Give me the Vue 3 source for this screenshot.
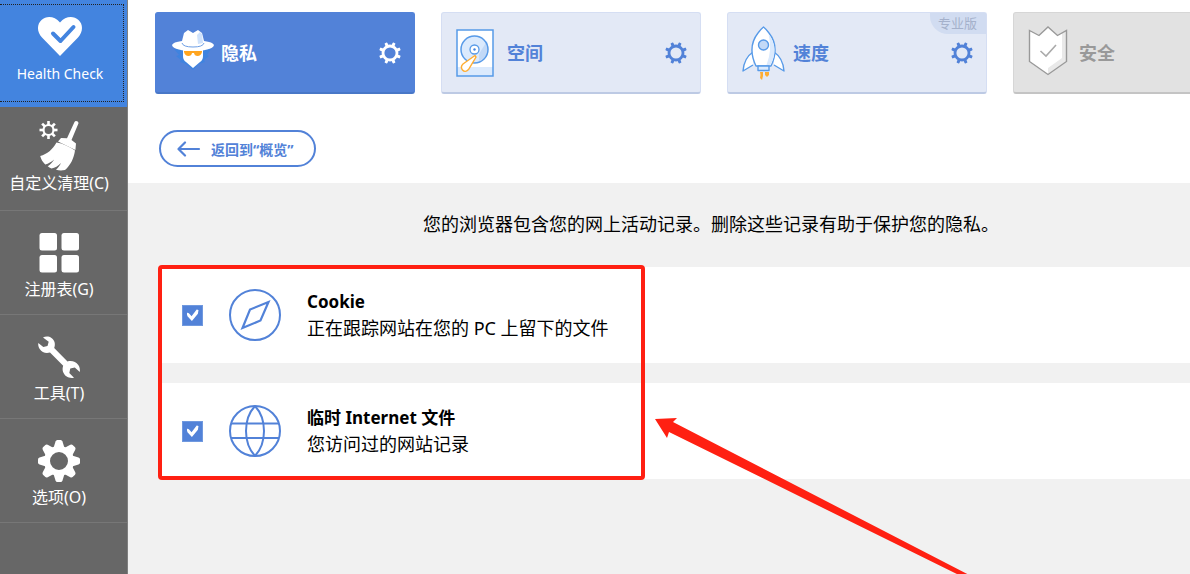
<script setup>
import { ref } from 'vue'

const nav = [
  { id: 'health', label: 'Health Check' },
  { id: 'clean', label: '自定义清理(C)' },
  { id: 'registry', label: '注册表(G)' },
  { id: 'tools', label: '工具(T)' },
  { id: 'options', label: '选项(O)' },
]
const cards = [
  { id: 'privacy', label: '隐私', tone: 'active', gear: true },
  { id: 'space', label: '空间', tone: 'normal', gear: true },
  { id: 'speed', label: '速度', tone: 'normal', gear: true, badge: '专业版' },
  { id: 'security', label: '安全', tone: 'disabled', gear: false },
]
const rows = ref([
  { id: 'cookie', title: 'Cookie', text: '正在跟踪网站在您的 PC 上留下的文件', checked: true },
  { id: 'temp', title: '临时 Internet 文件', text: '您访问过的网站记录', checked: true },
])
const teeth = [0, 45, 90, 135, 180, 225, 270, 315]
</script>

<template>
  <div class="app">
    <nav class="sidebar">
      <button v-for="n in nav" :key="n.id" type="button" class="nav-item" :class="{ current: n.id === 'health' }">
        <svg class="nav-icon" viewBox="0 0 52 52" aria-hidden="true">
          <g v-if="n.id === 'health'">
            <path fill="#fff" d="M26 46 8 27.500C2.500 21.500 3 14 7.500 10c5-4.500 13-4 18.500 2.500C31.500 6 39.500 5.500 44.500 10c4.500 4 5 11.500-.5 17.500Z" />
            <path fill="none" stroke="#4384df" stroke-width="4" stroke-linecap="round" stroke-linejoin="round" d="m19 23.500 7.500 7.500L39.500 17" />
          </g>
          <g v-else-if="n.id === 'clean'" fill="#fff">
            <g transform="translate(15.500 9)">
              <rect v-for="t in teeth" :key="t" x="-1.300" y="-9" width="2.600" height="4" :transform="`rotate(${t})`" />
              <circle r="5" fill="none" stroke="#fff" stroke-width="2.200" />
            </g>
            <path d="M41.500 1c.8-1.800 3.900-1 4 1.200L38.500 19l4.500 3.500-.6 6.500L25 20.500l3-3.500 6 .300Z" />
            <path d="M23.500 21.500c6.500 1 13 4 18.500 8-1 7.500-4.500 15-10 19.500-3 .7-6 .7-9-.3 2-2 4-4.200 5-6.700-3 3-6 5-9.500 5.400-1.500-.5-2.700-1.200-3.800-2.200 3-2 5-4.200 6.500-6.700-3 2.500-5.500 4-9 5-2.500-2.500-4-5-5-8.500 7-2 12.500-6.500 16.300-13.500Z" />
          </g>
          <g v-else-if="n.id === 'registry'" fill="#fff">
            <rect x="6.500" y="6" width="17.500" height="17.500" rx="2.500" />
            <rect x="28.500" y="6" width="17.500" height="17.500" rx="2.500" />
            <rect x="6.500" y="28" width="17.500" height="17.500" rx="2.500" />
            <rect x="28.500" y="28" width="17.500" height="17.500" rx="2.500" />
          </g>
          <path v-else-if="n.id === 'tools'" fill="#fff" d="M10 6.500c4-2.500 10-.5 11.500 4.500.6 2 .4 4-.3 6L34.500 30.500c4-1.300 8.500.2 10.800 3.500 1.400 2 1.900 4.500 1.500 7l-5-4.500-4.500 1-1 4.500 4.700 4.800c-5 1-9.500-1.500-11-6-.6-2-.5-4 .2-6L17 21.500c-4 1.300-8 0-10.300-3.500-1.300-2-1.700-4-1.400-6l5 4 4.200-1 1.200-4.200Z" />
          <g v-else transform="translate(26 26)" fill="#fff">
            <path v-for="t in teeth" :key="t" d="M-5.500-13-3.500-19.500q.6-1.500 1.800-1.500h3.400q1.200 0 1.800 1.500L5.500-13Z" :transform="`rotate(${t})`" />
            <circle r="12" fill="none" stroke="#fff" stroke-width="6" />
          </g>
        </svg>
        <span>{{ n.label }}</span>
      </button>
    </nav>

    <main class="main">
      <header class="header">
        <div class="cards">
          <section v-for="c in cards" :key="c.id" class="card" :class="c.tone">
            <svg class="card-icon" viewBox="1 4 44 56" aria-hidden="true">
              <g v-if="c.id === 'privacy'">
                <path fill="#3f83df" d="M4 28h37l-4 6 2 1-5 4 1 2-6 2-6 6-7-6-6-2 1-2-5-4 3-1Z" />
                <path fill="#fff" d="M13 28h20v7q0 4-3 6l-7 6-7-6q-3-2-3-6Z" />
                <path fill="#ffa51f" d="M14 30h18v1q-1 4-4.500 4-3 0-3.500-3h-2q-.5 3-3.500 3-3.500 0-4.500-4Z" />
                <path fill="#fff" d="M2 24q1-3 10-4l2-8 4-3 5 3 5-3 4 3 2 8q9 1 10 4c-1 8-41 8-42 0Z" />
                <path fill="#cfe2fb" d="m27 14 3-3 2 2 1 9-5 1Z" />
                <path fill="none" stroke="#6e9fe5" d="M12 22q1 4 11 4t11-4" />
              </g>
              <g v-else-if="c.id === 'space'">
                <path fill="#fff" d="M1 9h36v46H1z" />
                <path fill="#dbeafd" d="M1 46h36v9H1z" />
                <circle cx="18.500" cy="28.500" r="13.500" fill="#dbeafd" />
                <path fill="#c2d9f7" d="M23 33 31 20q4 15-8 20Z" />
                <circle cx="18.500" cy="28.500" r="13.500" fill="none" stroke="#579ae8" stroke-width="1.500" />
                <circle cx="18.500" cy="28.500" r="4.500" fill="#fff" stroke="#579ae8" stroke-width="1.300" />
                <circle cx="18.500" cy="28.500" r="1.200" fill="#4384df" />
                <path fill="#fff" stroke="#ffad32" stroke-width="1.400" d="M19 34.500 7 43q-3 3-.5 6t6-.5L20 36Z" />
                <path fill="none" stroke="#579ae8" stroke-width="1.500" d="M1 9h36v46H1z" />
              </g>
              <g v-else-if="c.id === 'speed'" stroke="#579ae8" stroke-width="1.400" stroke-linejoin="round">
                <path fill="#fff" d="M11 31Q2 37 1 50l10-6M32 31q9 6 10 19l-10-6" />
                <path fill="#fff" d="M14 45Q5 26 16 12q3-4 5.500-6 2.500 2 5.500 6 11 14 2 33Z" />
                <path fill="#dbeafd" stroke="none" d="M26.500 13q11 14 2 31h-4q6-15 2-31Z" />
                <circle cx="21.500" cy="24" r="5" fill="#c2d9f7" />
                <path fill="#dbeafd" d="M16 45h11v4.500H16z" />
                <path fill="#ffad32" stroke="none" d="M18 51h3v4l-1 4-2-2 .5-3Zm5 0h4v3l-2 2-2-2Z" />
              </g>
              <g v-else stroke-linejoin="miter">
                <path fill="#fff" d="m1.500 9.500 9.500 5L20 6l9.500 8.500 9-5v31L20 53.500l-18.500-13Z" />
                <path fill="#e9e9e9" d="m34 12 4.500-2v30L20 53v-6l14-10Z" />
                <path fill="none" stroke="#999" stroke-width="1.400" d="m1.500 9.500 9.500 5L20 6l9.500 8.500 9-5v31L20 53.500l-18.500-13Z" />
                <path fill="none" stroke="#aaa" stroke-width="1.600" d="m12.500 30 5.500 5 10-11" />
              </g>
            </svg>
            <h2>{{ c.label }}</h2>
            <span v-if="c.badge" class="badge">{{ c.badge }}</span>
            <button v-if="c.gear" type="button" class="gear" :aria-label="`${c.label}设置`">
              <svg viewBox="-11 -11 22 22" aria-hidden="true">
                <rect v-for="t in teeth" :key="t" x="-1.500" y="-11" width="3" height="4.500" rx=".7" fill="currentColor" :transform="`rotate(${t + 22.5})`" />
                <circle r="7" fill="none" stroke="currentColor" stroke-width="2.800" />
              </svg>
            </button>
          </section>
        </div>
        <button type="button" class="back">
          <svg viewBox="0 0 24 18" aria-hidden="true">
            <path fill="none" stroke="currentColor" stroke-width="2.200" stroke-linecap="round" stroke-linejoin="round" d="M22 9H2M8 2.500 1.500 9 8 15.500" />
          </svg>
          <span>返回到“概览”</span>
        </button>
      </header>

      <p class="summary">您的浏览器包含您的网上活动记录。删除这些记录有助于保护您的隐私。</p>

      <div class="list">
        <label v-for="r in rows" :key="r.id" class="row">
          <input v-model="r.checked" type="checkbox" />
          <svg class="row-icon" viewBox="-27 -27 54 54" fill="none" stroke="#5282d8" stroke-width="2" aria-hidden="true">
            <circle r="25" />
            <path v-if="r.id === 'cookie'" stroke-width="2.200" d="M13.500-13-5-5.500-12.500 13 5.500 5.500Z" />
            <path v-else d="M0-25C-12-12-12 12 0 25M0-25C12-12 12 12 0 25M-24-7.500h48M-24 7h48" />
          </svg>
          <span class="copy">
            <strong>{{ r.title }}</strong>
            <span>{{ r.text }}</span>
          </span>
        </label>
        <div class="frame"></div>
        <svg class="arrow" viewBox="0 0 320 160" aria-hidden="true">
          <path fill="#ff2012" d="M0 1 22 0 18 4 320 160H310L14 14 12 20Z" />
        </svg>
      </div>
    </main>
  </div>
</template>

<style>
body {
  background: #f1f1f1;
  overflow: hidden;
}
</style>

<style scoped>
.app {
  display: flex;
  min-height: 100vh;
  font-family: "Noto Sans", "Noto Sans CJK SC", sans-serif;
  color: #000;
}
button {
  font-family: inherit;
  border: 0;
  margin: 0;
  padding: 0;
  background: none;
}
.sidebar {
  flex: none;
  width: 128px;
  box-sizing: border-box;
  background: #676767;
  border-right: 1px solid #808080;
}
.nav-item {
  display: flex;
  flex-direction: column;
  align-items: center;
  width: 100%;
  height: 104px;
  padding: 16px 9px 0 0;
  color: #fff;
  font-size: 16px;
  line-height: 20px;
  white-space: nowrap;
  border-bottom: 1px solid #777;
}
.nav-item:nth-child(2) {
  padding-top: 14px;
}
.nav-item.current {
  height: 107px;
  padding: 10px 7px 0 0;
  gap: 2px;
  background: #4384df;
  border-bottom: 0;
  font-size: 14px;
  position: relative;
}
.nav-item.current::after {
  content: "";
  position: absolute;
  inset: 4px 3px 5px 0;
  border: 1px dotted #222;
  border-left: 0;
}
.nav-icon {
  flex: none;
  width: 52px;
  height: 52px;
  overflow: visible;
}
.main {
  flex: 1;
  min-width: 0;
  background: #f1f1f1;
  overflow: hidden;
}
.header {
  background: #fff;
  padding: 12px 0 16px 27px;
}
.cards {
  display: flex;
  gap: 26px;
  overflow: hidden;
}
.card {
  position: relative;
  flex: 0 0 260px;
  height: 82px;
  box-sizing: border-box;
  display: flex;
  align-items: center;
  padding: 0 13px 0 15px;
  border: 1px solid #d5def3;
  border-bottom: 2px solid #bdcae4;
  border-radius: 3px;
  background: #e3e9f6;
  color: #5282d8;
}
.card.active {
  background: #5282d8;
  border-color: #5282d8;
  border-bottom-color: #4877c7;
  color: #fff;
}
.card.disabled {
  background: #e2e2e2;
  border-color: #d6d6d6;
  border-bottom-color: #c4c4c4;
  color: #999;
}
.card-icon {
  width: 44px;
  height: 56px;
  overflow: visible;
}
.card h2 {
  margin: 0 auto 0 6px;
  font-size: 18px;
  line-height: 24px;
}
.gear {
  width: 22px;
  height: 22px;
  color: inherit;
}
.gear svg {
  display: block;
}
.badge {
  position: absolute;
  top: 0;
  right: 0;
  padding: 0 9px 0 8px;
  border-bottom-left-radius: 18px;
  background: #d1dcf1;
  color: #a5b1cb;
  font-size: 13px;
  line-height: 21px;
}
.back {
  display: flex;
  align-items: center;
  gap: 10px;
  margin: 36px 0 0 4px;
  height: 37px;
  padding: 0 21px 0 16px;
  border: 2px solid #5282d8;
  border-radius: 19px;
  background: #fff;
  color: #5282d8;
  font-size: 14px;
  font-weight: 700;
}
.back svg {
  width: 24px;
  height: 18px;
}
.summary {
  margin: 27px 0 29px 295px;
  font-size: 18px;
  line-height: 28px;
  white-space: nowrap;
}
.list {
  position: relative;
  display: grid;
  gap: 20px;
  margin-left: 32px;
}
.row {
  display: flex;
  align-items: center;
  height: 96px;
  padding-left: 22px;
  background: #fff;
}
.row input {
  appearance: none;
  display: grid;
  place-items: center;
  width: 21px;
  height: 21px;
  margin: 0;
  border: 1px solid #7099df;
  background: #fff;
}
.row input:checked {
  background: #5282d8;
}
.row input:checked::before {
  content: "";
  width: 12px;
  height: 12px;
  background: #fff;
  clip-path: polygon(0 30%, 20% 35%, 42% 60%, 85% 5%, 100% 8%, 95% 40%, 45% 100%, 8% 60%);
}
.row-icon {
  width: 54px;
  height: 54px;
  margin: 0 25px;
}
.copy {
  display: flex;
  flex-direction: column;
  font-size: 18px;
  line-height: 27px;
}
.copy strong {
  font-size: 17px;
}
.frame {
  position: absolute;
  top: -2px;
  left: -2px;
  width: 487px;
  bottom: -1px;
  box-sizing: border-box;
  border: 4px solid #ff2012;
  border-radius: 4px;
}
.arrow {
  position: absolute;
  top: 151px;
  left: 495px;
  width: 320px;
  height: 160px;
}
</style>
